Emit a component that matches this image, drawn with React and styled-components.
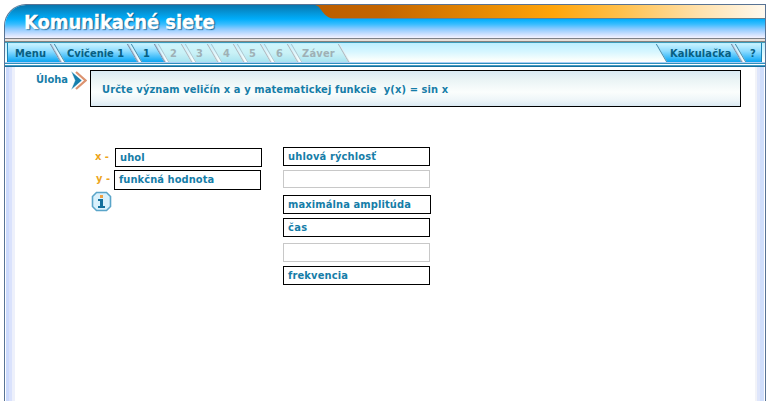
import React from "react";
import styled, { createGlobalStyle } from "styled-components";

const Global = createGlobalStyle`
  * { box-sizing: border-box; }
  body { margin: 0; background: #fff; overflow: hidden; }
`;

const Page = styled.div`
  width: 775px;
  height: 401px;
  padding: 4px 9px 0 4px;
  font: bold 11px/14px "DejaVu Sans Condensed", "DejaVu Sans", sans-serif;
  font-stretch: condensed;
  color: #167da8;
  white-space: nowrap;
`;

const Frame = styled.div`
  display: flex;
  flex-direction: column;
  width: 762px;
  height: 397px;
  border: 1px solid #587394;
  border-bottom: 0;
  border-radius: 22px 0 0 0;
  overflow: hidden;
`;

const Header = styled.header`
  display: flex;
  justify-content: space-between;
  height: 33px;
  background: linear-gradient(#0876ad 0, #0592d4 7px, #00adfa 14px, #35bcff 19px, #8dcaff 24px, #c9dfff 29px, #f4f2ff 33px);
`;

const Title = styled.h1`
  margin: 0;
  padding: 5px 0 0 19px;
  font-size: 20px;
  line-height: 24px;
  letter-spacing: ${(p) => p.$track}px;
  color: #fff;
  -webkit-text-stroke: 0.3px #fff;
  text-shadow: 1px 1px 1px #075f92, 1px 0 1px #0b72a8;
`;

const Swoosh = styled.svg`
  display: block;
  width: 450px;
  height: 14px;
`;

const Rule = styled.div`
  height: 5px;
  flex: none;
  background: linear-gradient(#7c8088 0 1px, #e6dfda 1px 3px, #85807c 3px 4px, #3c9bb9 4px 5px);
`;

const Nav = styled.nav`
  display: flex;
  justify-content: space-between;
  flex: none;
  height: 19px;
  padding: 0 3px 0 2px;
  background: linear-gradient(#bdefff, #d6f6ff 45%, #fafffc 90%, #fff);
`;

const NavEdge = styled.div`
  flex: none;
  height: 5px;
  background: linear-gradient(#a9cdf5 0 1px, #2d91bd 1px 2px, #fff 2px 3px, #429bc4 3px 4px, #176f9b 4px 5px);
`;

const TabGroup = styled.div`
  display: flex;
  overflow: hidden;
  padding: ${(p) => (p.$end ? "0 0 0 8px" : "0 8px 0 0")};
  border: 0 solid #1984b5;
  border-width: ${(p) => (p.$end ? "0 1px 0 0" : "0 0 0 1px")};
`;

const tabFill = {
  on: "linear-gradient(#c6f2ff, #8edcff 40%, #28b3f8 85%, #0ca4ee)",
  off: "linear-gradient(#cff5fc, #c9f1f6 50%, #a9e4f0)",
};

const Tab = styled.button`
  position: relative;
  z-index: 0;
  width: ${(p) => p.$w}px;
  height: 19px;
  margin: 0;
  padding: 0 0 0 ${(p) => p.$pad}px;
  border: 0;
  background: none;
  font: inherit;
  line-height: 21px;
  text-align: left;
  letter-spacing: ${(p) => p.$track || 0}px;
  color: ${(p) => (p.$off ? "#9eb0b5" : "#075f83")};

  &::before {
    content: "";
    position: absolute;
    z-index: -1;
    inset: 1px ${(p) => (p.$last ? -12 : 1)}px 0 ${(p) => (p.$first ? -12 : 2)}px;
    background: ${(p) => (p.$off ? tabFill.off : tabFill.on)};
    border-left: 1px solid ${(p) => (p.$off ? "#a9c3cb" : "#3f86a8")};
    border-right: 1px solid ${(p) => (p.$off ? "#a9b4ba" : "#6f88a2")};
    box-shadow: 1px 0 ${(p) => (p.$off ? "#e3eef2" : "#c4cfe4")};
    transform: skewX(30deg);
  }
`;

const Body = styled.main`
  display: flex;
  flex-direction: column;
  flex: 1;
  padding: 3px 24px 0 31px;
  background:
    linear-gradient(90deg, #fff 0 1px, #cbd9fc 1px 4px, #dae2fc 4px 7px, #edf0fb 7px 10px, transparent 10px) left / 10px 100% no-repeat,
    linear-gradient(270deg, #fff 0 1px, #d0defb 1px 5px, #dfe6fb 5px 8px, #f2f3f8 8px 10px, transparent 10px) right / 10px 100% no-repeat,
    #fff;
`;

const TaskRow = styled.section`
  display: flex;
  align-items: flex-start;
`;

const TaskLabel = styled.div`
  width: 36px;
  padding-top: 3px;
`;

const Arrow = styled.svg`
  width: 16px;
  height: 19px;
  margin: 1px 2px 0 -1px;
`;

const Question = styled.div`
  width: 651px;
  height: 37px;
  margin-left: 1px;
  padding: 12px 0 0 11px;
  border: 1px solid #000;
  background: linear-gradient(#d9eaf3, #eaf4f5 25%, #fbfefd 60%, #edf5f8 85%, #dbeaf3);
  white-space: pre;
  letter-spacing: ${(p) => p.$track}px;
`;

const Exercise = styled.section`
  display: flex;
  align-items: flex-start;
  margin-top: 40px;
`;

const Answers = styled.div`
  display: flex;
  flex-direction: column;
  width: 247px;
  padding: 1px 0 0 54px;
`;

const AnswerRow = styled.div`
  display: flex;
  margin-bottom: 3px;
`;

const Variable = styled.span`
  width: ${(p) => p.$w}px;
  flex: none;
  padding: 2px 0 0 ${(p) => p.$pad}px;
  color: #eda51c;
`;

const Box = styled.div`
  width: ${(p) => p.$w || 147}px;
  height: ${(p) => p.$h || 19}px;
  margin-top: ${(p) => p.$gap || 0}px;
  padding: 2px 0 0 4px;
  border: 1px solid ${(p) => (p.$empty ? "#c8c8c8" : "#000")};
  background: #fff;
  letter-spacing: ${(p) => p.$track || 0}px;
`;

const Options = styled.div`
  display: flex;
  flex-direction: column;
`;

const InfoIcon = styled.svg`
  width: 21px;
  height: 21px;
  margin: -2px 0 0 1px;
`;

const tabs = [
  { label: "Menu", w: 49, pad: 7, track: 0.15, first: true },
  { label: "Cvičenie 1", w: 77, pad: 10 },
  { label: "1", w: 27, pad: 9 },
  { label: "2", w: 27, pad: 9, off: true },
  { label: "3", w: 26, pad: 8, off: true },
  { label: "4", w: 26, pad: 9, off: true },
  { label: "5", w: 27, pad: 9, off: true },
  { label: "6", w: 27, pad: 9, off: true },
  { label: "Záver", w: 51, pad: 8, track: 0.2, off: true },
];

export default function App() {
  return (
    <Page>
      <Global />
      <Frame>
        <Header>
          <Title $track={-0.1}>Komunikačné siete</Title>
          <Swoosh viewBox="0 0 450 14">
            <defs>
              <linearGradient id="amber">
                <stop offset="0" stopColor="#bb5d00" />
                <stop offset=".15" stopColor="#c46500" />
                <stop offset=".38" stopColor="#e88b03" />
                <stop offset=".53" stopColor="#ffa50b" />
                <stop offset=".68" stopColor="#ffc04c" />
                <stop offset=".85" stopColor="#ffe0aa" />
                <stop offset="1" stopColor="#fff9ee" />
              </linearGradient>
            </defs>
            <path d="M0 0 C8 2 6 12 20 14 H450 V0Z" fill="url(#amber)" />
            <path d="M17 13.5 H450" stroke="#608394" />
          </Swoosh>
        </Header>
        <Rule />
        <Nav>
          <TabGroup>
            {tabs.map((t) => (
              <Tab key={t.label} $w={t.w} $pad={t.pad} $track={t.track} $off={t.off} $first={t.first}>
                {t.label}
              </Tab>
            ))}
          </TabGroup>
          <TabGroup $end>
            <Tab $w={79} $pad={11} $track={0.1}>Kalkulačka</Tab>
            <Tab $w={23} $pad={12} $last>?</Tab>
          </TabGroup>
        </Nav>
        <NavEdge />
        <Body>
          <TaskRow>
            <TaskLabel>Úloha</TaskLabel>
            <Arrow viewBox="0 0 16 19">
              <path d="M5 1 L14.5 9.5 L5 18" fill="none" stroke="#dc9370" strokeWidth="2.2" />
              <path d="M0 0 L11 9.5 L0 19 L4 9.5Z" fill="#177fad" stroke="#fff" strokeWidth=".5" />
            </Arrow>
            <Question $track={0.11}>{"Určte význam veličín x a y matematickej funkcie  y(x) = sin x"}</Question>
          </TaskRow>
          <Exercise>
            <Answers>
              <AnswerRow>
                <Variable $w={25} $pad={5}>x -</Variable>
                <Box $track={0.1}>uhol</Box>
              </AnswerRow>
              <AnswerRow>
                <Variable $w={24} $pad={6}>y -</Variable>
                <Box $h={20} $track={0.07}>funkčná hodnota</Box>
              </AnswerRow>
              <InfoIcon viewBox="0 0 21 21">
                <path d="M5.5 1.5 H15.5 L19.5 5.5 V15.5 L15.5 19.5 H5.5 L1.5 15.5 V5.5Z" fill="#d9f1fc" stroke="#5aa5c9" strokeWidth="1.6" />
                <path d="M7 8 H12 V15 H14 V17 H7 V15 H9 V10 H7Z" fill="#126f9c" />
                <rect x="9" y="4" width="3" height="3" fill="#eda044" />
              </InfoIcon>
            </Answers>
            <Options>
              <Box $track={0.15}>uhlová rýchlosť</Box>
              <Box $empty $gap={4} $h={18} />
              <Box $gap={7} $w={148} $track={0.12}>maximálna amplitúda</Box>
              <Box $gap={4} $track={0.3}>čas</Box>
              <Box $empty $gap={6} />
              <Box $gap={4} $track={0.15}>frekvencia</Box>
            </Options>
          </Exercise>
        </Body>
      </Frame>
    </Page>
  );
}
